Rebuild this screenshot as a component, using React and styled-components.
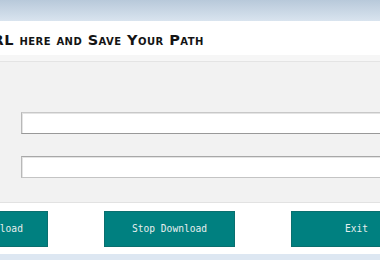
import React from 'react'
import styled, { createGlobalStyle } from 'styled-components';

const GlobalStyle = createGlobalStyle`
  html, body {
    margin: 0;
    padding: 0;
    width: 380px;
    height: 260px;
    overflow: hidden;
    background: #dde7f2;
  }
`;

const Window = styled.div`
  width: 505px;
  margin-left: -83px;
  display: flex;
  flex-direction: column;
`;

const TitleBar = styled.div`
  height: 21px;
  background: linear-gradient(to bottom, #b8c9da, #d9e4ef);
`;

const Header = styled.div`
  height: 34px;
  background: #ffffff;
  display: flex;
  align-items: center;
  padding-left: 16px;
  padding-top: 4px;
  box-sizing: border-box;
`;

const Title = styled.h1`
  margin: 0;
  font-family: "DejaVu Sans", sans-serif;
  font-weight: bold;
  font-variant: small-caps;
  font-size: 14.5px;
  letter-spacing: 0.45px;
  white-space: nowrap;
  color: #141414;
`;

const Divider = styled.div`
  height: 6px;
  background: #f6f6f6;
  border-bottom: 1px solid #e4e4e4;
`;

const Content = styled.div`
  background: #f2f2f2;
  padding: 50px 0 24px 104px;
  display: flex;
  flex-direction: column;
  gap: 22px;
  border-bottom: 1px solid #e2e2e2;
`;

const Field = styled.input`
  box-sizing: border-box;
  height: 22px;
  width: 420px;
  background: #ffffff;
  border: 1px solid #b8b8b8;
  border-bottom-color: ${p => (p.$dark ? '#c4c4c4' : '#999999')};
  border-top-color: ${p => (p.$dark ? '#a8a8a8' : '#c8c8c8')};
  box-shadow: inset 1px 1px 0 #e4e4e4;
  outline: none;
`;

const Footer = styled.div`
  background: #ffffff;
  height: 51px;
  display: flex;
  align-items: center;
  justify-content: space-between;
`;

const Button = styled.button`
  width: 131px;
  height: 36px;
  background: #008080;
  border: 1px solid #0a6f6f;
  color: #e8eeee;
  font-family: "DejaVu Sans Mono", monospace;
  font-size: 9.6px;
  cursor: pointer;
  padding: 0;
`;

const App = () => {
    return (
        <>
            <GlobalStyle />
            <Window>
                <TitleBar />
                <Header>
                    <Title>Enter URL here and Save Your Path</Title>
                </Header>
                <Divider />
                <Content>
                    <Field />
                    <Field $dark />
                </Content>
                <Footer>
                    <Button>Start Download</Button>
                    <Button>Stop Download</Button>
                    <Button>Exit</Button>
                </Footer>
            </Window>
        </>
    )
}

export default App
